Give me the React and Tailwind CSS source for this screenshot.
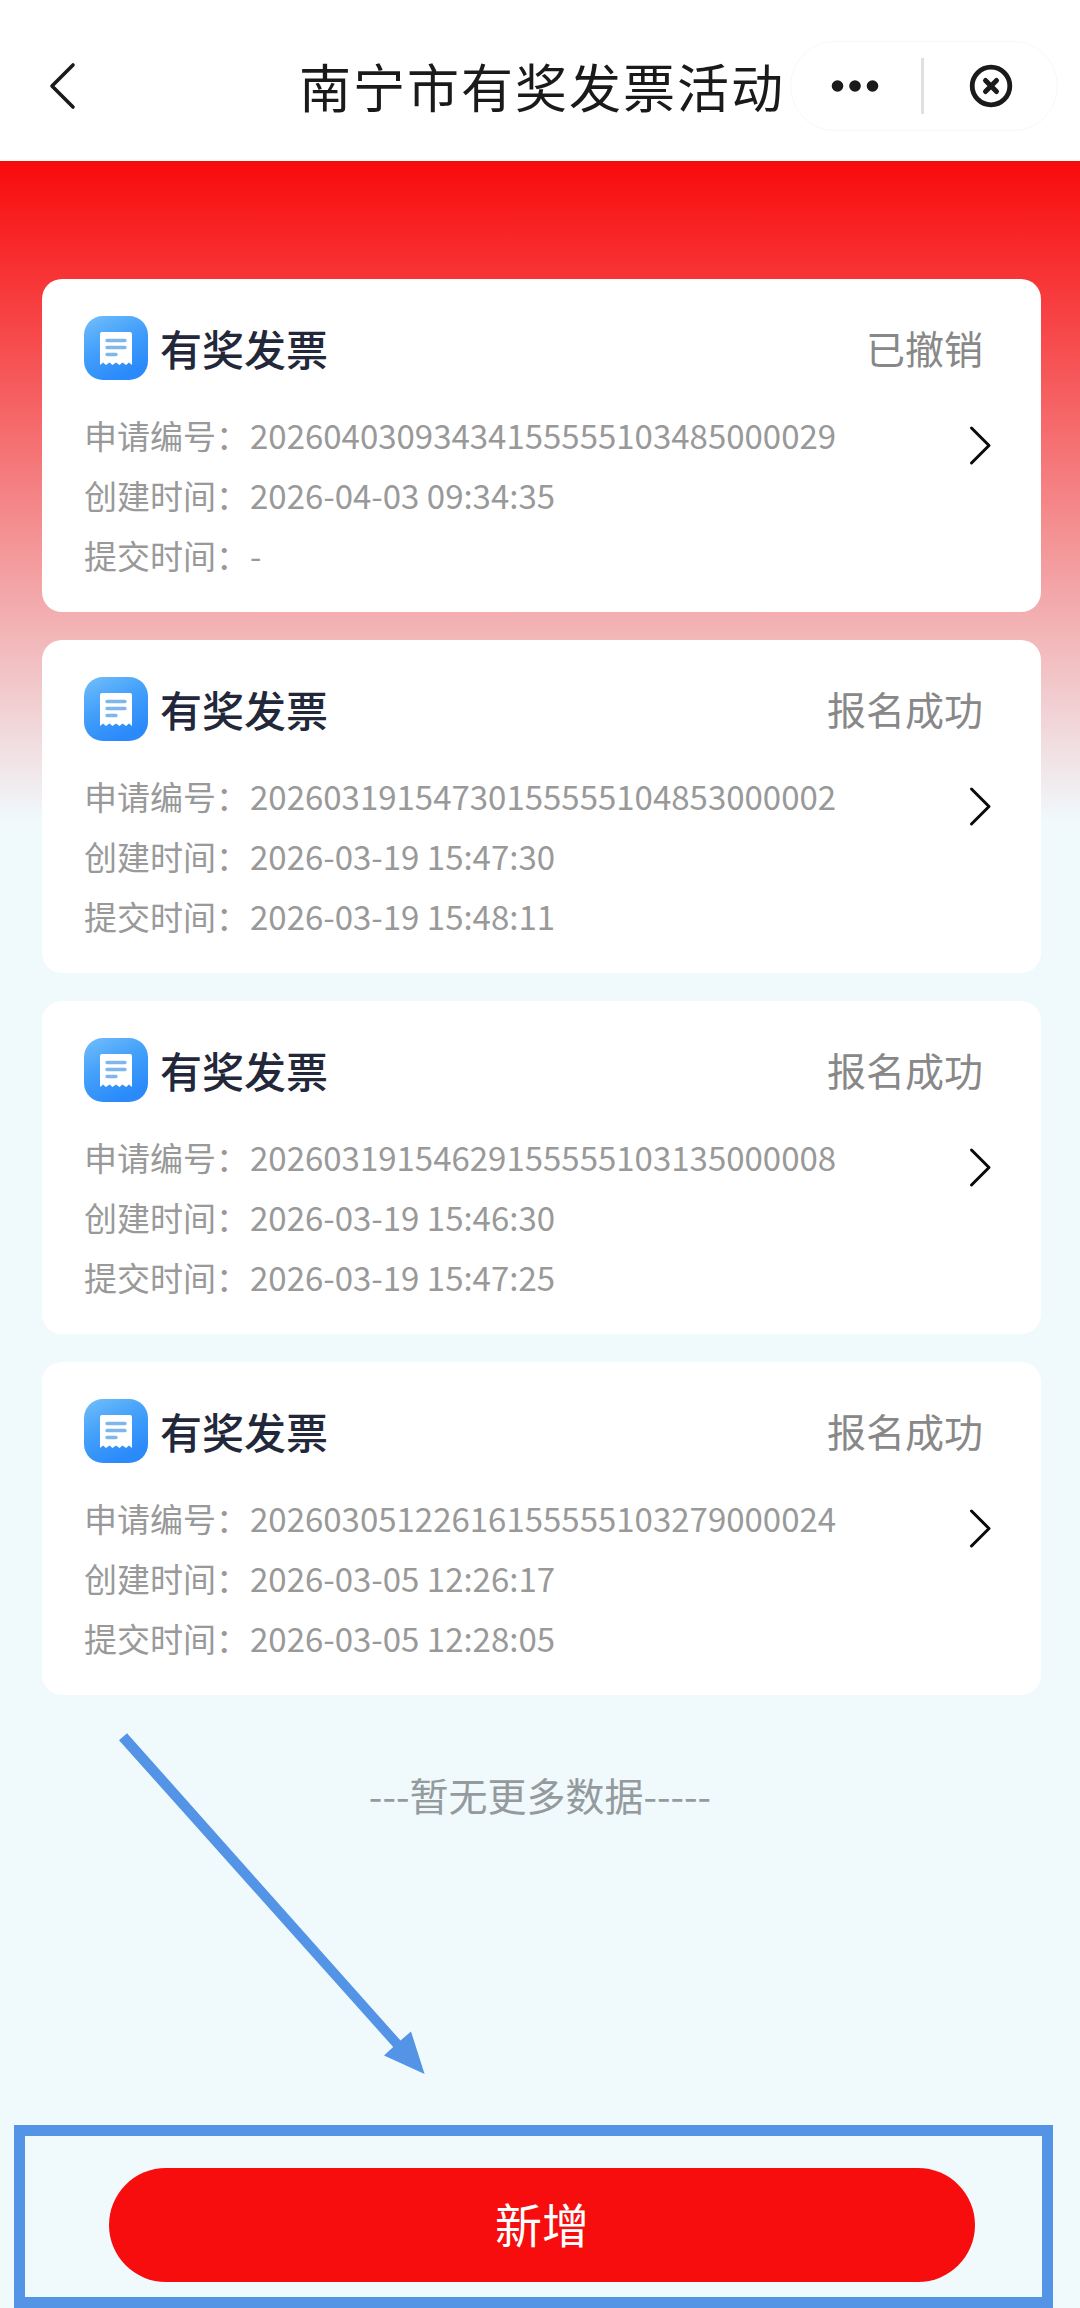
import React from "react";

const records = [
  { status: "已撤销", id: "20260403093434155555103485000029", created: "2026-04-03 09:34:35", submitted: "-" },
  { status: "报名成功", id: "20260319154730155555104853000002", created: "2026-03-19 15:47:30", submitted: "2026-03-19 15:48:11" },
  { status: "报名成功", id: "20260319154629155555103135000008", created: "2026-03-19 15:46:30", submitted: "2026-03-19 15:47:25" },
  { status: "报名成功", id: "20260305122616155555103279000024", created: "2026-03-05 12:26:17", submitted: "2026-03-05 12:28:05" },
];

function InvoiceIcon() {
  return (
    <svg className="size-16 shrink-0" viewBox="0 0 64 64">
      <defs>
        <linearGradient id="invoice-bg" x1="0" y1="0" x2="0.5" y2="1">
          <stop offset="0" stopColor="#72bffb" />
          <stop offset="0.5" stopColor="#44a0fa" />
          <stop offset="1" stopColor="#2a8afa" />
        </linearGradient>
      </defs>
      <rect width="64" height="64" rx="19" fill="url(#invoice-bg)" />
      <path
        d="M18 16H46a2 2 0 0 1 2 2V49L45 46.5 42 49 38.5 46.5 35.5 49 32 46.5 28.5 49 25.5 46.5 22 49 19 46.5 16 49V18a2 2 0 0 1 2-2Z"
        fill="#fff"
      />
      <path d="M23 24.5H41M23 31.5H41M23 38.5H32" stroke="#7fb7ea" strokeWidth="3.4" strokeLinecap="round" />
    </svg>
  );
}

function Row({ label, value }) {
  return (
    <div className="flex h-[60px] items-center whitespace-nowrap">
      <span className="w-[166px]">{label}：</span>
      <span>{value}</span>
    </div>
  );
}

function Card({ record }) {
  return (
    <section className="flex h-[333px] flex-col rounded-[20px] bg-white pt-[37px] pr-[47px] pl-[42px]">
      <div className="flex h-16 items-center">
        <InvoiceIcon />
        <h2 className="ml-3 flex-1 text-[42px] leading-[64px] font-medium text-[#22273a]">有奖发票</h2>
        <span className="mr-[11px] mb-[2px] text-[39px] leading-[62px] text-[#888888]">{record.status}</span>
      </div>
      <div className="mt-[25px] flex items-start justify-between text-[33px] leading-[60px] text-[#999999]">
        <div>
          <Row label="申请编号" value={record.id} />
          <Row label="创建时间" value={record.created} />
          <Row label="提交时间" value={record.submitted} />
        </div>
        <svg className="mt-[18px] h-11 w-7" viewBox="0 0 28 44" fill="none" stroke="#0a0a0a" strokeWidth="3" strokeLinecap="round" strokeLinejoin="round">
          <path d="M5.5 5L23 22.5L5.5 40" />
        </svg>
      </div>
    </section>
  );
}

export default function App() {
  return (
    <div className="relative flex h-[2308px] w-[1080px] flex-col overflow-hidden bg-[#f0f9fc] font-['Noto_Sans_CJK_SC',sans-serif]">
      <header className="flex h-[161px] shrink-0 items-center bg-white pt-[11px] pr-[22px]">
        <svg className="ml-[43px] h-14 w-10" viewBox="0 0 40 56" fill="none" stroke="#1a1a1a" strokeWidth="3.6" strokeLinecap="round" strokeLinejoin="round">
          <path d="M30 7L9 28L30 49" />
        </svg>
        <h1 className="ml-[216px] text-[52px] leading-[70px] tracking-[2px] whitespace-nowrap text-[#1a1a1a]">南宁市有奖发票活动</h1>
        <div className="ml-auto flex h-[90px] w-[268px] shrink-0 items-center rounded-full border border-[#f8f8f8]">
          <svg className="ml-[40px] h-3 w-12" viewBox="0 0 48 12" fill="#1a1a1a">
            <circle cx="6.5" cy="6" r="5.8" />
            <circle cx="24" cy="6" r="5.8" />
            <circle cx="41.5" cy="6" r="5.8" />
          </svg>
          <div className="ml-[42px] h-14 w-[3px] bg-[#e0e0e0]" />
          <svg className="ml-[45px] size-11" viewBox="0 0 44 44" fill="none" stroke="#1a1a1a">
            <circle cx="22" cy="22" r="18.8" strokeWidth="4.8" />
            <path d="M16.5 16.5L27.5 27.5M27.5 16.5L16.5 27.5" strokeWidth="5" strokeLinecap="round" />
          </svg>
        </div>
      </header>

      <main className="flex flex-1 flex-col bg-linear-to-b/srgb from-[#f90a0b] to-[#f0f9fc] to-[660px] pt-[118px]">
        <div className="mr-[39px] ml-[42px] flex flex-col gap-7">
          {records.map((r) => (
            <Card key={r.id} record={r} />
          ))}
        </div>
        <p className="mt-[69px] text-center text-[39px] leading-[60px] text-[#959a9c]">---暂无更多数据-----</p>
        <div className="mt-auto mr-[27px] ml-[14px] flex h-[183px] flex-col border-[11px] border-[#5394e6] px-[84px] pt-8">
          <button className="h-[114px] w-[866px] rounded-full bg-[#f70d0d] text-[47px] leading-[114px] text-white">
            <span className="block -mt-1">新增</span>
          </button>
        </div>
      </main>

      <svg className="absolute top-[1725px] left-[110px] h-[360px] w-[330px]" viewBox="110 1725 330 360" fill="#5394e6">
        <path d="M127 1733.2L400.5 2040.5L411 2031.5L424.6 2074L384 2055.5L393.2 2047L119 1740.2Z" />
      </svg>
    </div>
  );
}
